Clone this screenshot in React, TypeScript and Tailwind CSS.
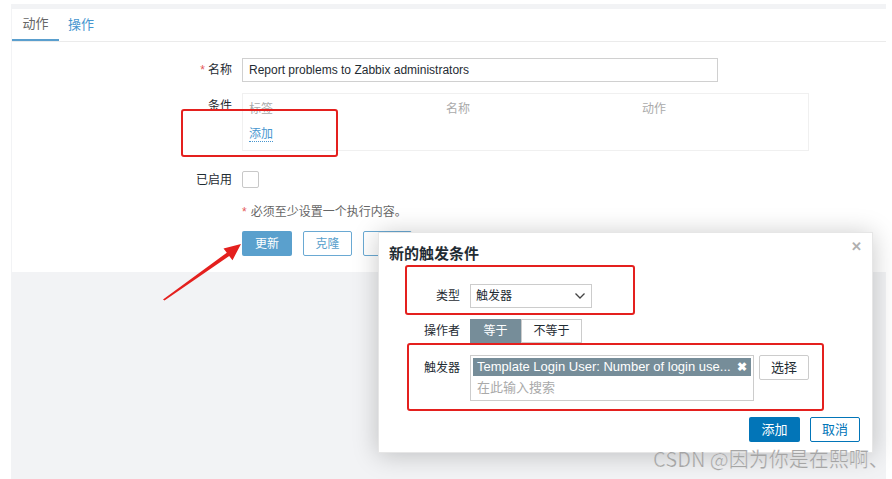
import React from "react";

const F = { fontFamily: '"Liberation Sans", Arial, "Noto Sans CJK SC", sans-serif' };

export default function App() {
  return (
    <div className="relative w-[892px] h-[479px] overflow-hidden bg-white text-[12px] text-[#1f2c33]" style={F}>
      <div className="h-full pl-[11px] pr-[6px] pt-[4px]">
        <div className="h-full bg-[#f2f3f5] pt-[5px] pl-[1px]">
          <div className="h-[263px] bg-white">
            {/* tabs */}
            <div className="h-[33px] border-b border-[#ebebeb] flex items-stretch">
              <div className="w-[47px] flex items-center justify-center border-b-2 border-[#5a9fce] text-[13px] text-[#666]">动作</div>
              <div className="px-[9px] flex items-center text-[13px] text-[#4796cf]">操作</div>
            </div>
            {/* form */}
            <div className="grid grid-cols-[220px_1fr] gap-x-[10px] pt-[16px]">
              <div className="h-[24px] flex items-center justify-end text-[12px]">
                <span className="text-[#e45959] mr-[3px]">*</span>名称
              </div>
              <div className="w-[476px] h-[24px] border border-[#d0d0d0] flex items-center px-[6px] text-[12px]">
                Report problems to Zabbix administrators
              </div>

              <div className="mt-[11px] pt-[4px] text-right">条件</div>
              <div className="mt-[11px] w-[567px] h-[58px] border border-[#f0f0f0] px-[6px] pt-[6px]">
                <div className="flex text-[#aaa]">
                  <span className="w-[197px]">标签</span>
                  <span className="w-[196px]">名称</span>
                  <span>动作</span>
                </div>
                <div className="mt-[7px]">
                  <span className="text-[#4796cf] border-b border-dotted border-[#4796cf]">添加</span>
                </div>
              </div>

              <div className="mt-[20px] h-[17px] flex items-center justify-end">已启用</div>
              <div className="mt-[20px] h-[17px]">
                <div className="w-[17px] h-[17px] border border-[#c8c8c8] rounded-[2px]" />
              </div>

              <div className="mt-[16px]" />
              <div className="mt-[16px] h-[16px] flex items-center text-[12px] text-[#666]">
                <span className="text-[#e45959] mr-[4px]">*</span>必须至少设置一个执行内容。
              </div>

              <div className="mt-[11px]" />
              <div className="mt-[11px] flex gap-[11px]">
                <div className="w-[50px] h-[25px] rounded-[2px] bg-[#5aa0cd] text-white flex items-center justify-center">更新</div>
                <div className="w-[49px] h-[25px] rounded-[2px] border border-[#6aa9d3] text-[#5a9fcc] flex items-center justify-center">克隆</div>
                <div className="w-[49px] h-[25px] rounded-[2px] border border-[#6aa9d3]" />
              </div>
            </div>
          </div>
        </div>
      </div>

      {/* dialog */}
      <div className="absolute left-[378px] top-[232px] w-[495px] h-[221px] bg-white border border-[#e6e6e6] shadow-[0_2px_24px_rgba(0,0,0,0.22)] flex flex-col">
        <div className="absolute right-[10px] top-[4px] text-[#b0b0b0] text-[13px] font-bold">✕</div>
        <div className="pl-[10px] pt-[9px] text-[15px] font-bold text-[#1f2c33] h-[51px]" style={{ fontFamily: '"Noto Sans CJK SC", sans-serif' }}>新的触发条件</div>
        <div className="grid grid-cols-[81px_1fr] gap-x-[10px] items-center">
          <div className="text-right h-[24px] leading-[24px]">类型</div>
          <div className="w-[122px] h-[24px] border border-[#ccc] flex items-center justify-between px-[5px]">
            <span>触发器</span>
            <svg width="12" height="8" viewBox="0 0 12 8" fill="none" stroke="#444" strokeWidth="1.3"><path d="M1.5 1.5 L6 6 L10.5 1.5" /></svg>
          </div>

          <div className="text-right mt-[11px] h-[24px] leading-[24px]">操作者</div>
          <div className="mt-[11px] flex h-[24px]">
            <div className="w-[51px] bg-[#768d99] text-white flex items-center justify-center">等于</div>
            <div className="w-[61px] border border-[#ccc] flex items-center justify-center">不等于</div>
          </div>

          <div className="self-start text-right mt-[13px] h-[24px] leading-[24px]">触发器</div>
          <div className="mt-[12px] flex gap-[5px] items-start">
            <div className="w-[284px] h-[46px] border border-[#ccc] p-[2px]">
              <div className="h-[18px] bg-[#768d99] text-white text-[13px] flex items-center justify-between pl-[4px] pr-[4px]">
                <span>Template Login User: Number of login use...</span>
                <span className="text-[12px] font-bold">✖</span>
              </div>
              <div className="pl-[4px] pt-[2px] text-[13px] text-[#aaa]">在此输入搜索</div>
            </div>
            <div className="w-[50px] h-[25px] border border-[#ccc] rounded-[2px] flex items-center justify-center text-[13px]">选择</div>
          </div>
        </div>
        <div className="mt-auto mb-[10px] mr-[12px] flex justify-end gap-[10px]">
          <div className="w-[51px] h-[25px] rounded-[2px] bg-[#0275b8] text-white flex items-center justify-center text-[13px]">添加</div>
          <div className="w-[50px] h-[25px] rounded-[2px] border border-[#0275b8] text-[#0275b8] flex items-center justify-center text-[13px]">取消</div>
        </div>
      </div>

      {/* red annotation boxes */}
      <div className="absolute left-[181px] top-[109px] w-[157px] h-[48px] border-2 border-[#e4201e] rounded-[3px]" />
      <div className="absolute left-[405px] top-[265px] w-[230px] h-[50px] border-2 border-[#e4201e] rounded-[3px]" />
      <div className="absolute left-[407px] top-[343px] w-[417px] h-[68px] border-2 border-[#e4201e] rounded-[3px]" />

      {/* arrow */}
      <svg className="absolute left-0 top-0" width="892" height="479" viewBox="0 0 892 479">
        <polygon points="163,299.5 226.8,252.7 223.5,248.4 241,244 232.5,260.2 229.2,255.9 164.5,300.5" fill="#e4201e" />
      </svg>

      {/* watermark */}
      <div className="absolute left-[653px] top-[446px] text-[20px] leading-[26px] text-[#a5a5a5] whitespace-nowrap" style={{ fontFamily: '"Noto Sans CJK SC", sans-serif', WebkitTextStroke: "0.2px #fff" }}>
        CSDN @因为你是在熙啊、
      </div>
    </div>
  );
}
